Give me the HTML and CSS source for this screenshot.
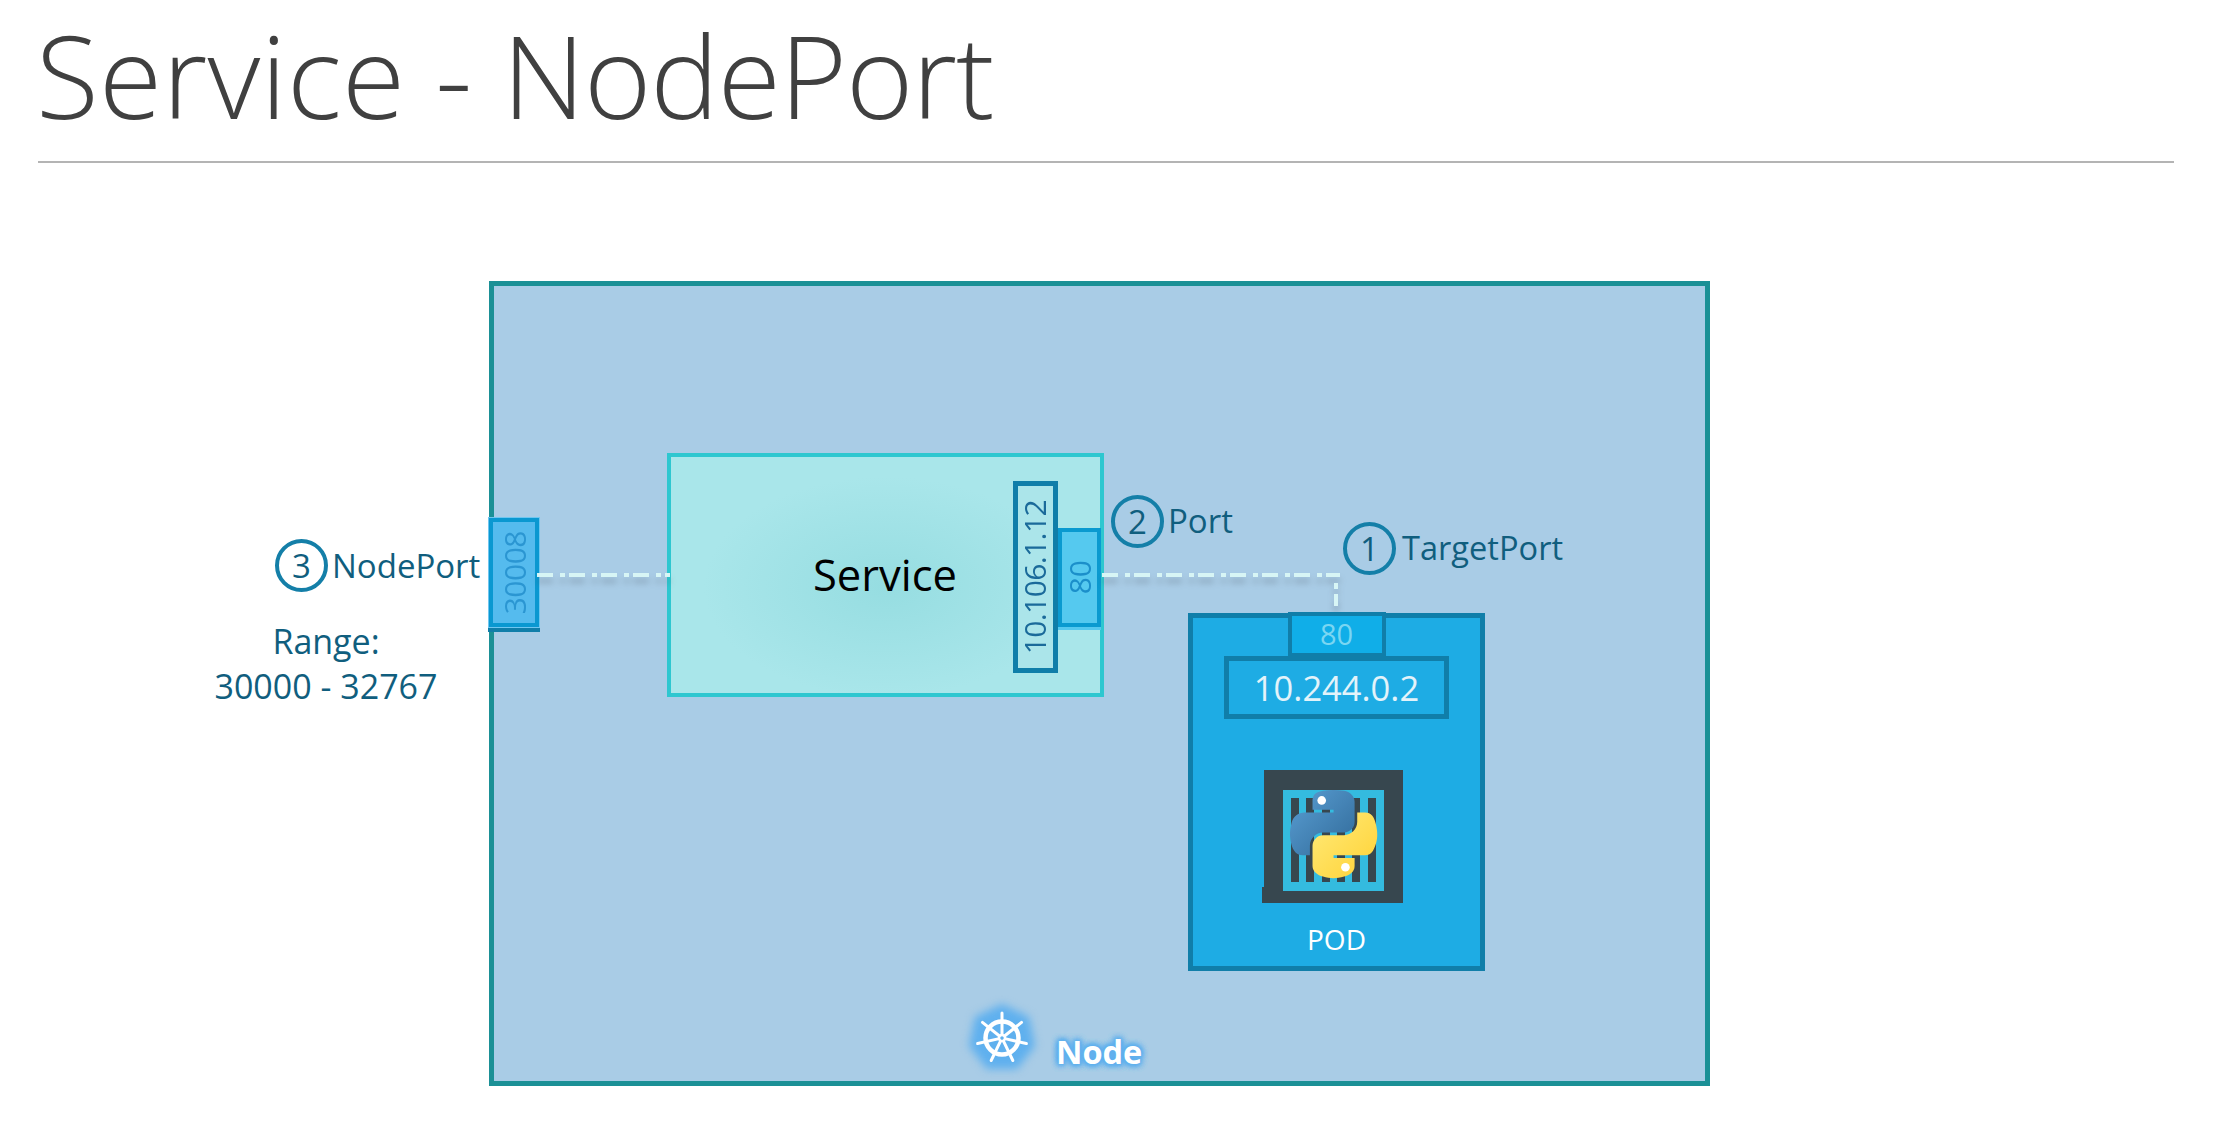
FILE: index.html
```html
<!DOCTYPE html>
<html lang="en">
<head>
<meta charset="utf-8">
<title>Service - NodePort</title>
<link rel="stylesheet" href="styles.css">
</head>
<body>
<header class="head"><h1 class="title"><span class="title-text"><span class="word-a">Service</span> - <span class="word-b">NodePort</span></span></h1></header>
<main class="canvas">
  <div class="node"></div>
  <div class="service"><span class="service-name">Service</span></div>
  <div class="svc-ip"><span class="vert">10.106.1.12</span></div>
  <div class="svc-port"><span class="vert">80</span></div>
  <div class="node-port"><span class="vert">30008</span></div>

  <svg class="wires" width="1400" height="500" viewBox="0 0 1400 500">
    <path class="wire" d="M537 412H670"/>
    <path class="wire" d="M1102 412H1340"/>
    <path class="wire drop" d="M1336 420V446"/>
  </svg>

  <div class="pod">
    <div class="pod-port">80</div>
    <div class="pod-ip">10.244.0.2</div>
    <svg class="container" width="141" height="133" viewBox="0 0 141 133">
      <path fill="#37474f" d="M2 0H141V133H0V117H2Z"/>
      <rect x="21" y="20" width="101" height="101" fill="#34bbdf"/>
      <g fill="#37474f">
        <rect x="29" y="28" width="8" height="84"/>
        <rect x="44" y="28" width="8" height="84"/>
        <rect x="60" y="28" width="8" height="84"/>
        <rect x="75" y="28" width="8" height="84"/>
        <rect x="90" y="28" width="8" height="84"/>
        <rect x="106" y="28" width="8" height="84"/>
      </g>
      <defs>
        <linearGradient id="pyb" x1="0" y1="0" x2="1" y2="1"><stop offset="0" stop-color="#5a9fd4"/><stop offset="1" stop-color="#306998"/></linearGradient>
        <linearGradient id="pyy" x1="0.1" y1="0.1" x2="0.9" y2="0.9"><stop offset="0" stop-color="#ffe873"/><stop offset="1" stop-color="#ffd43b"/></linearGradient>
      </defs>
      <g transform="translate(28 20) scale(.785)">
        <path fill="url(#pyb)" d="M54.919 0c-4.584.02-8.96.413-12.812 1.095C30.76 3.099 28.7 7.295 28.7 15.032v10.219h26.813v3.406H18.638c-7.793 0-14.616 4.684-16.75 13.594-2.462 10.213-2.571 16.586 0 27.25 1.905 7.938 6.457 13.594 14.25 13.594h9.22V70.844c0-8.851 7.656-16.656 16.75-16.656h26.78c7.454 0 13.406-6.138 13.406-13.625V15.032c0-7.266-6.13-12.725-13.406-13.937C64.282.328 59.502-.02 54.918 0z"/>
        <path fill="url(#pyy)" d="M85.638 28.657v11.906c0 9.231-7.826 17-16.75 17H42.106c-7.336 0-13.406 6.279-13.406 13.625v25.531c0 7.266 6.319 11.54 13.406 13.625 8.488 2.496 16.627 2.947 26.782 0 6.75-1.954 13.406-5.888 13.406-13.625V86.5H55.513v-3.405H95.7c7.793 0 10.696-5.436 13.406-13.594 2.8-8.4 2.68-16.476 0-27.25-1.925-7.758-5.604-13.594-13.406-13.594H85.638z"/>
        <circle cx="40.4" cy="13.3" r="5.5" fill="#fff"/>
        <circle cx="70.6" cy="98.4" r="5.5" fill="#fff"/>
      </g>
    </svg>
    <div class="pod-name">POD</div>
  </div>

  <div class="badge badge-3">3</div>
  <div class="label label-nodeport">NodePort</div>
  <div class="range">Range:<br>30000 - 32767</div>
  <div class="badge badge-2">2</div>
  <div class="label label-port">Port</div>
  <div class="badge badge-1">1</div>
  <div class="label label-target">TargetPort</div>

  <svg class="helm" width="90" height="90" viewBox="-45 -45 90 90">
    <path class="helm-glow" d="M0-34 27-21 33 8 15 31H-15L-33 8-27-21Z"/>
    <g fill="none" stroke="#fff">
      <circle r="16.5" stroke-width="4.5"/>
      <circle r="3" stroke-width="2.6"/>
      <g stroke-width="3" stroke-linecap="round">
        <path d="M0-4V-25"/>
        <path d="M0-4V-25" transform="rotate(51.43)"/>
        <path d="M0-4V-25" transform="rotate(102.86)"/>
        <path d="M0-4V-25" transform="rotate(154.29)"/>
        <path d="M0-4V-25" transform="rotate(205.71)"/>
        <path d="M0-4V-25" transform="rotate(257.14)"/>
        <path d="M0-4V-25" transform="rotate(308.57)"/>
      </g>
    </g>
  </svg>
  <div class="node-name">Node</div>
</main>
</body>
</html>
```
FILE: styles.css
```css
html, body { margin: 0; padding: 0; background: #fff; }
body { width: 2216px; height: 1122px; overflow: hidden; font-family: "Open Sans", "Liberation Sans", sans-serif; }

.head { height: 163px; padding: 0 42px 0 38px; }
.title {
  margin: 0; height: 163px; box-sizing: border-box;
  font-size: 115px; line-height: 150px; font-weight: 300; color: #404040;
  border-bottom: 2px solid #b4b4b4; white-space: nowrap;
}
.title-text { display: inline-block; margin-left: -2px; }
.word-a { letter-spacing: .3px; }
.word-b { letter-spacing: -1.1px; }

.canvas { position: relative; height: 959px; }

.node { position: absolute; left: 489px; top: 118px; width: 1221px; height: 805px; box-sizing: border-box; border: 5px solid #1b9096; background: #a9cce6; }

.service {
  position: absolute; left: 667px; top: 290px; width: 437px; height: 244px; box-sizing: border-box;
  border: 4px solid #2ec7d0;
  background: radial-gradient(ellipse at 50% 55%, #96dde1 0%, #a9e6ea 60%);
}
.service-name { position: absolute; left: 142px; top: 88px; font-size: 43.5px; line-height: 60px; color: #000; }

.vert { writing-mode: vertical-rl; transform: rotate(180deg); white-space: nowrap; }

.svc-ip, .svc-port, .node-port { position: absolute; box-sizing: border-box; display: flex; align-items: center; justify-content: center; }
.svc-ip { left: 1013px; top: 318px; width: 45px; height: 192px; padding-right: 3px; border: 5px solid #0f7ea9; background: #abe5ea; color: #1a6a9a; font-size: 30px; letter-spacing: -.6px; }
.svc-port { left: 1058px; top: 365px; width: 43px; height: 99px; padding-right: 1px; border: 4px solid #0a9ad0; background: #55c9ef; color: #1b8fca; font-size: 30px; box-shadow: 0 3px 0 #55c9ef; }
.node-port { left: 488px; top: 354px; width: 52px; height: 111px; border: 5px solid #0a98d1; background: #55bbee; color: #2b96d2; font-size: 30px; letter-spacing: -.5px; box-shadow: 0 4px 0 #107ea9; outline: 1px solid #6fc6f0; outline-offset: -1px; }

.wires { position: absolute; left: 0; top: 0; overflow: visible; filter: drop-shadow(0 6px 3px rgba(60, 70, 80, .28)); }
.wire { fill: none; stroke: #d7f5f5; stroke-width: 4; stroke-dasharray: 16 7 5 4; }
.drop { stroke-dasharray: 6 5 12 5; }

.pod {
  position: absolute; left: 1188px; top: 450px; width: 297px; height: 358px; box-sizing: border-box;
  border: 5px solid #107ea9; background: #1eace4;
  display: flex; flex-direction: column; align-items: center;
}
.pod-port { width: 98px; height: 45px; margin-top: -6px; box-sizing: border-box; border: 4px solid #107ea9; background: #10aee8; color: #7ad6f2; font-size: 29px; line-height: 35px; text-align: center; flex: none; }
.pod-ip { width: 225px; height: 63px; margin-top: -1px; box-sizing: border-box; border: 5px solid #107ea9; color: #e3f3fa; font-size: 34.5px; line-height: 53px; text-align: center; flex: none; }
.container { display: block; margin-top: 51px; margin-right: 8px; flex: none; }
.pod-name { margin-top: 18px; font-size: 28px; line-height: 36px; color: #fff; }

.badge { position: absolute; width: 53px; height: 53px; box-sizing: border-box; border: 4px solid #147fa8; border-radius: 50%; display: flex; align-items: center; justify-content: center; font-size: 33px; line-height: 1; color: #105e7e; }
.badge-3 { left: 275px; top: 376px; }
.badge-2 { left: 1111px; top: 332px; }
.badge-1 { left: 1343px; top: 359px; }

.label { position: absolute; font-size: 33px; line-height: 40px; color: #105e7e; white-space: nowrap; }
.label-nodeport { left: 332px; top: 383px; }
.label-port { left: 1168px; top: 338px; }
.label-target { left: 1402px; top: 365px; font-size: 32.6px; }

.range { position: absolute; left: 205px; top: 456px; width: 242px; text-align: center; font-size: 34px; line-height: 45px; color: #105e7e; white-space: nowrap; }

.helm { position: absolute; left: 957px; top: 830px; overflow: visible; }
.helm-glow { fill: #5fb0ee; filter: blur(4px); }
.node-name { position: absolute; left: 1056px; top: 867px; font-size: 32.5px; line-height: 44px; font-weight: 700; color: #fff; text-shadow: 0 0 7px #5fb0ee, 0 0 7px #5fb0ee, 0 0 7px #5fb0ee, 0 0 7px #5fb0ee, 0 0 5px #5fb0ee, 0 0 5px #5fb0ee, 0 0 3px #5fb0ee; }
```
